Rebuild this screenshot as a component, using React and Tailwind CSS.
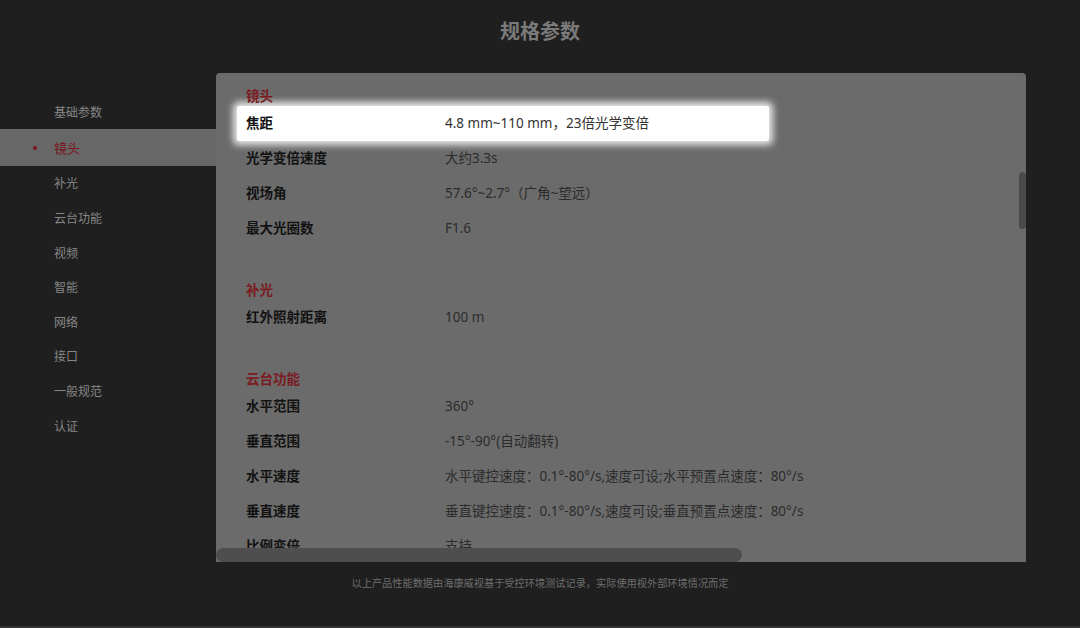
import React from "react";

const NAV = ["基础参数", "镜头", "补光", "云台功能", "视频", "智能", "网络", "接口", "一般规范", "认证"];

const SECTIONS = [
  {
    title: "镜头",
    rows: [
      ["焦距", "4.8 mm~110 mm，23倍光学变倍", true],
      ["光学变倍速度", "大约3.3s"],
      ["视场角", "57.6°~2.7°（广角~望远）"],
      ["最大光圈数", "F1.6"],
    ],
  },
  {
    title: "补光",
    rows: [["红外照射距离", "100 m"]],
  },
  {
    title: "云台功能",
    rows: [
      ["水平范围", "360°"],
      ["垂直范围", "-15°-90°(自动翻转)"],
      ["水平速度", "水平键控速度：0.1°-80°/s,速度可设;水平预置点速度：80°/s"],
      ["垂直速度", "垂直键控速度：0.1°-80°/s,速度可设;垂直预置点速度：80°/s"],
      ["比例变倍", "支持"],
    ],
  },
];

const font = { fontFamily: '"Noto Sans", "Noto Sans CJK SC", sans-serif' };

function Row({ label, value, active }) {
  return (
    <div
      className={
        "flex items-center h-[35px] w-[532px] pl-[9px] " +
        (active ? "bg-white rounded-[2px] shadow-[0_0_7px_4px_rgba(255,255,255,0.85)]" : "")
      }
    >
      <div className={"w-[199px] shrink-0 font-bold text-[13.5px] " + (active ? "text-[#111]" : "text-[#121212]")}>
        {label}
      </div>
      <div className={"whitespace-nowrap text-[13.5px] " + (active ? "text-[#333]" : "text-[#2c2c2c]")}>{value}</div>
    </div>
  );
}

export default function App() {
  return (
    <div className="w-full h-[628px] bg-[#1f1f1f] flex flex-col overflow-hidden" style={font}>
      <div className="h-[73px] shrink-0 flex justify-center pt-[17px]">
        <h1 className="text-[20px] leading-[30px] font-bold text-[#7a7a7a]">规格参数</h1>
      </div>

      <div className="flex h-[489px] shrink-0">
        <nav className="w-[216px] shrink-0 pt-[21px]">
          {NAV.map((item) => {
            const active = item === "镜头";
            return (
              <div
                key={item}
                className={
                  "relative flex items-center pl-[54px] pt-[3px] " +
                  (active ? "h-[37px] bg-[#676767] text-[#7a1520] text-[13px]" : "h-[34.6px] text-[12px] text-[#868686]")
                }
              >
                {active && <span className="absolute left-[33px] top-[17px] w-[4px] h-[4px] rounded-full bg-[#7a1520]" />}
                {item}
              </div>
            );
          })}
        </nav>

        <div className="relative w-[810px] shrink-0 bg-[#6b6b6b] rounded-t-[4px] overflow-hidden">
          <div className="pt-[13px] pl-[21px]">
            {SECTIONS.map((s, i) => (
              <div key={s.title} className={i > 0 ? "mt-[34px]" : ""}>
                <div className="h-[20px] flex items-center pl-[9px] text-[13.5px] font-bold text-[#7b1b22]">{s.title}</div>
                {s.rows.map(([l, v, a]) => (
                  <Row key={l} label={l} value={v} active={a} />
                ))}
              </div>
            ))}
          </div>
          <div className="absolute right-0 top-[99px] w-[7px] h-[57px] rounded-full bg-[#4a4a4a]" />
          <div className="absolute left-0 bottom-0 w-[526px] h-[14px] rounded-full bg-[#4e4e4e]" />
        </div>
      </div>

      <div className="flex-1 flex justify-center pt-[14px]">
        <p className="text-[10.2px] text-[#6e6e6e]">以上产品性能数据由海康威视基于受控环境测试记录，实际使用视外部环境情况而定</p>
      </div>
      <div className="h-[2px] bg-[#333]" />
    </div>
  );
}
